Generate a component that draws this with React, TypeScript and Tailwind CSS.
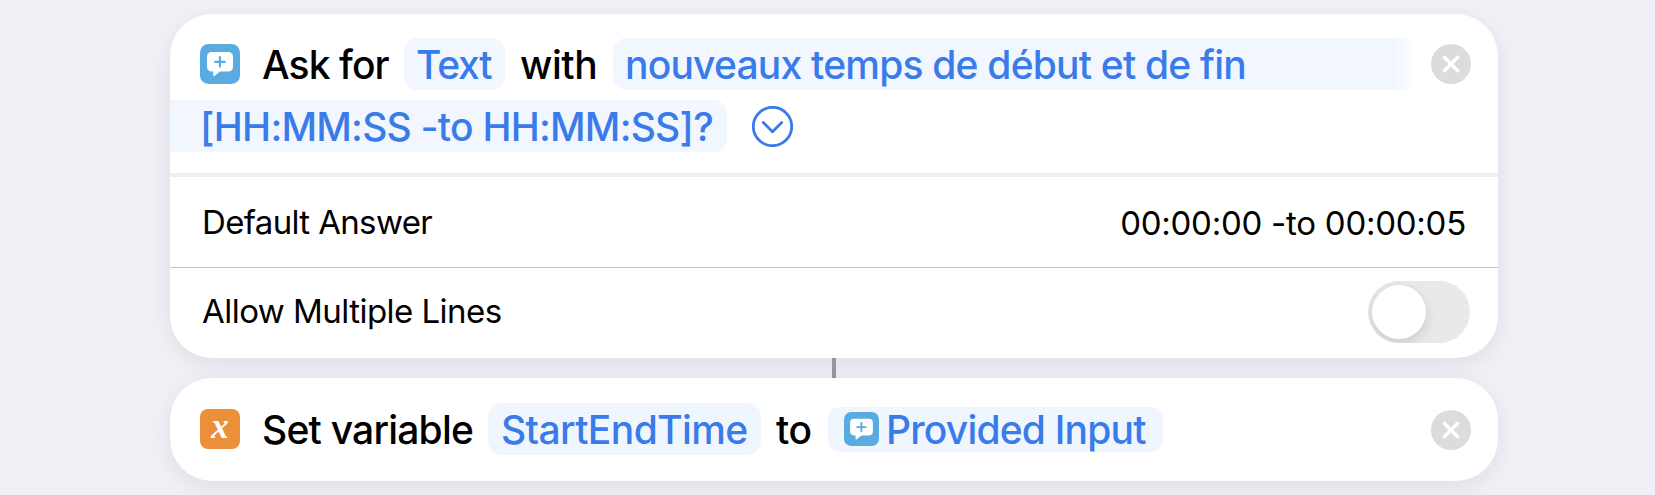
import React from 'react';

interface TileProps {
  className: string;
}

const AskTile: React.FC<TileProps> = ({ className }) => (
  <svg viewBox="0 0 40 40" preserveAspectRatio="none" className={className}>
    <rect width="40" height="40" rx="8.500" fill="#5aabdf" />
    <path
      d="M11.500 8h17a4.500 4.500 0 0 1 4.500 4.500v10.500a4.500 4.500 0 0 1-4.500 4.500h-8.500l-5.500 4.600c-.7.500-1.300.2-1.300-.6v-4h-1.700a4.500 4.500 0 0 1-4.500-4.500v-10.500a4.500 4.500 0 0 1 4.500-4.500z"
      fill="#fff"
    />
    <path d="M19.900 13v9.600M15.100 17.800h9.600" stroke="#5aabdf" strokeWidth="2.200" strokeLinecap="round" />
  </svg>
);

const VariableTile: React.FC<TileProps> = ({ className }) => (
  <div className={`${className} flex items-center justify-center rounded-lg bg-[#eb8f3a]`}>
    <span className="-mt-1.5 font-['Liberation_Serif',serif] text-[35px] leading-none font-bold text-white italic">x</span>
  </div>
);

const CloseButton = () => (
  <button className="size-10 shrink-0">
    <svg viewBox="0 0 40 40" className="size-10">
      <circle cx="20" cy="20" r="20" fill="#dcdcde" />
      <path d="M13.300 13.300l13.400 13.400M26.700 13.300L13.300 26.700" stroke="#fff" strokeWidth="3.400" strokeLinecap="round" />
    </svg>
  </button>
);

const ExpandButton = () => (
  <button className="ml-[25px] size-[41px] shrink-0">
    <svg viewBox="0 0 41 41" className="size-[41px]" fill="none" stroke="#3a7bea">
      <circle cx="20.500" cy="20.500" r="19.200" strokeWidth="2.800" />
      <path d="M11.300 16.500l9.200 9.200 9.200-9.200" strokeWidth="2.800" strokeLinecap="round" strokeLinejoin="round" />
    </svg>
  </button>
);

const Switch = () => (
  <button role="switch" aria-checked="false" className="flex h-[62px] w-[102px] overflow-hidden rounded-full bg-[#e9e9eb] p-1">
    <span className="size-[54px] rounded-full bg-white shadow-[0_4px_12px_rgba(0,0,0,0.14)]" />
  </button>
);

export default function App() {
  return (
    <main className="flex h-[495px] w-[1655px] flex-col overflow-hidden bg-[#f0f0f6] pt-3.5 pl-[170px] font-['Inter',sans-serif] whitespace-nowrap text-black">
      <section className="h-[344px] w-[1328px] shrink-0 overflow-hidden rounded-[42px] bg-white shadow-[0_6px_24px_rgba(0,0,0,0.08)]">
        <header className="h-[159px] pt-6 text-[39px] leading-[54px] font-medium">
          <div className="flex h-[52px] items-center pl-[30px]">
            <AskTile className="size-10" />
            <span className="ml-[22px] h-[52px] w-[142px] tracking-[-0.9px]">Ask for</span>
            <span className="h-[52px] w-[101px] rounded-[14px] bg-[#f1f6ff] pl-3 tracking-[-1.2px] text-[#3a7bea]">Text</span>
            <span className="ml-[15px] h-[52px] w-[93px] tracking-[-0.4px]">with</span>
            <span className="h-[52px] w-[804px] rounded-l-[14px] bg-linear-to-r from-[#f1f6ff] from-97% to-white pl-3 tracking-[-0.79px] text-[#3a7bea]">
              nouveaux temps de début et de fin
            </span>
            <div className="ml-3.5 flex">
              <CloseButton />
            </div>
          </div>
          <div className="mt-2.5 flex h-[52px] items-center">
            <span className="h-[52px] w-[557px] rounded-r-[14px] bg-[#f1f6ff] pl-[30px] tracking-[-0.77px] text-[#3a7bea]">
              [HH:MM:SS -to HH:MM:SS]?
            </span>
            <ExpandButton />
          </div>
        </header>
        <div className="flex h-[94px] items-center justify-between border-t-4 border-[#eeeeee] pr-8 pl-8 text-[33px]">
          <span className="pt-0.5 tracking-[-0.65px]">Default Answer</span>
          <span className="pt-1 tracking-[-0.25px]">00:00:00 -to 00:00:05</span>
        </div>
        <div className="flex h-[91px] items-center justify-between border-t border-[#c4c4c6] pr-7 pb-0.5 pl-8 text-[33px]">
          <span className="tracking-[-0.54px]">Allow Multiple Lines</span>
          <Switch />
        </div>
      </section>

      <div className="ml-[662px] h-5 w-1 shrink-0 bg-[#94979e]" />

      <section className="flex h-[103px] w-[1328px] shrink-0 items-center rounded-[42px] bg-white pb-px pl-[30px] text-[39px] leading-[54px] font-medium shadow-[0_6px_24px_rgba(0,0,0,0.08)]">
        <VariableTile className="size-10" />
        <span className="ml-[22px] h-[52px] w-[226px] tracking-[-0.78px]">Set variable</span>
        <span className="h-[52px] w-[273px] rounded-[14px] bg-[#f0f6fe] pl-[13px] tracking-[-0.6px] text-[#3a7bea]">StartEndTime</span>
        <span className="ml-[15px] h-[52px] w-[52px] tracking-[-0.5px]">to</span>
        <span className="flex h-[45px] w-[335px] items-center rounded-xl bg-[#f0f6fe] pl-4 tracking-[-0.8px] text-[#3a7bea]">
          <AskTile className="mr-[7px] h-[34px] w-[35px]" />
          <span className="pt-0.5">Provided Input</span>
        </span>
        <div className="ml-[268px] flex pt-px">
          <CloseButton />
        </div>
      </section>
    </main>
  );
}
